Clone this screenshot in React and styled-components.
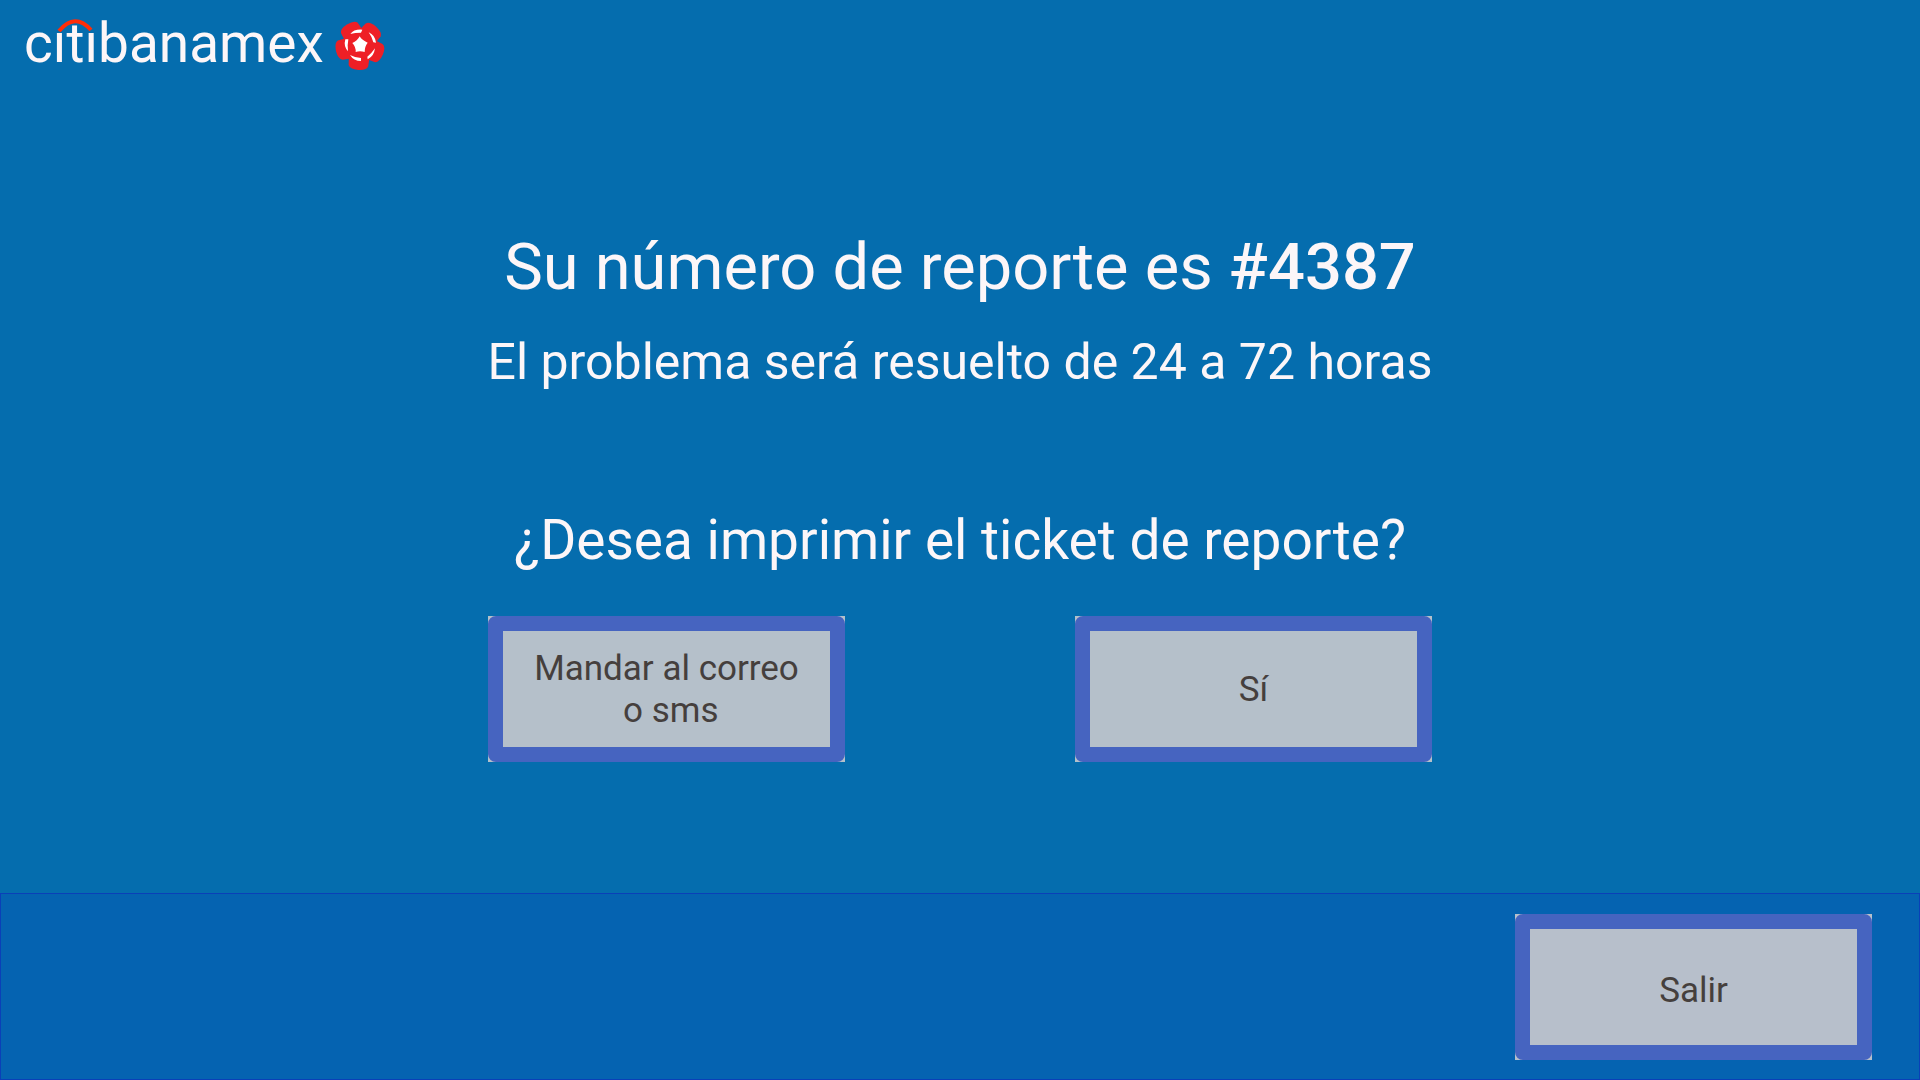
import React from "react";
import styled, { createGlobalStyle } from "styled-components";

const GlobalStyle = createGlobalStyle`
  *, *::before, *::after { box-sizing: border-box; }
  body {
    margin: 0;
    background: #056dae;
    color: #fcf6f8;
    font-family: Roboto, "Liberation Sans", sans-serif;
  }
`;

const Page = styled.div`
  display: flex;
  flex-direction: column;
  min-height: 100vh;
`;

const Header = styled.header`
  display: flex;
  align-items: center;
  gap: 11px;
  padding: 11px 24px 0;
`;

const Wordmark = styled.span`
  position: relative;
  font-size: 55px;
  line-height: 64px;
`;

const Arc = styled.svg`
  position: absolute;
  left: 32px;
  top: 7px;
`;

const Main = styled.main`
  flex: 1;
  display: flex;
  flex-direction: column;
  align-items: center;
  padding: 154px 24px 48px;
  text-align: center;
`;

const Title = styled.h1`
  margin: 0 0 28px;
  font-size: 65px;
  line-height: 76px;
  font-weight: 400;
`;

const ReportNumber = styled.strong`
  font-weight: 500;
`;

const Notice = styled.p`
  margin: 0 0 116px;
  font-size: 50px;
  line-height: 59px;
`;

const Question = styled.h2`
  margin: 0 0 44px;
  font-size: 55px;
  line-height: 64px;
  font-weight: 400;
`;

const Choices = styled.div`
  display: flex;
  justify-content: center;
  gap: 230px;
`;

const Frame = styled.span`
  display: flex;
  background: ${(p) => (p.$footer ? "#b7bfcb" : "#b5c0ca")};
`;

const Button = styled.button`
  width: 357px;
  min-height: 146px;
  padding: ${(p) => (p.$low ? "8px 24px 0" : "2px 24px 0")};
  border: 15px solid #4664c0;
  border-radius: 8px;
  background: transparent;
  color: #453f3d;
  font-family: inherit;
  font-size: 35px;
  line-height: 42px;
  cursor: pointer;
`;

const Footer = styled.footer`
  display: flex;
  justify-content: flex-end;
  padding: 20px 47px 19px;
  border: 1px solid #0a40b8;
  background: #0563b1;
`;

const petals = [0, 72, 144, 216, 288];

function Flower() {
  return (
    <svg width="50" height="56" viewBox="0 -18 150 168" aria-hidden="true">
      <g fill="#ee1f26">
        {petals.map((a) => (
          <path
            key={a}
            transform={`rotate(${a + 4} 75 73)`}
            d="M75 73L44 94Q44 116 45 134Q49 146 75 147Q100 147 104 134Q106 116 106 92Z"
          />
        ))}
      </g>
      <g fill="#fff">
        <path d="M46 39Q57 24 82 26L78 35Q60 35 46 39Z" />
        <path d="M101 34Q120 42 123 65L115 64Q111 48 101 34Z" />
        <path d="M120 82Q117 106 98 115L97 107Q109 98 120 82Z" />
        <path d="M45 102Q60 110 78 111L78 120Q56 120 45 102Z" />
        <path d="M31 55Q25 76 39 91L38 73L40 55Z" />
        <path d="M74 46Q81 58 98 65Q89 76 89 93Q75 89 62 93Q63 78 52 66Q67 60 74 46Z" />
      </g>
    </svg>
  );
}

function Action({ children, footer }) {
  return (
    <Frame $footer={footer}>
      <Button type="button" $low={footer}>{children}</Button>
    </Frame>
  );
}

export default function App() {
  return (
    <Page>
      <GlobalStyle />
      <Header>
        <Wordmark>
          cıtıbanamex
          <Arc width="38" height="16" viewBox="0 0 38 16" aria-hidden="true">
            <path d="M3 13Q19 -6 35 12" fill="none" stroke="#ff2d08" strokeWidth="4" />
          </Arc>
        </Wordmark>
        <Flower />
      </Header>
      <Main>
        <Title>
          Su número de reporte es <ReportNumber>#4387</ReportNumber>
        </Title>
        <Notice>El problema será resuelto de 24 a 72 horas</Notice>
        <Question>¿Desea imprimir el ticket de reporte?</Question>
        <Choices>
          <Action>Mandar al correo {"\u00a0"}o sms</Action>
          <Action>Sí</Action>
        </Choices>
      </Main>
      <Footer>
        <Action footer>Salir</Action>
      </Footer>
    </Page>
  );
}
